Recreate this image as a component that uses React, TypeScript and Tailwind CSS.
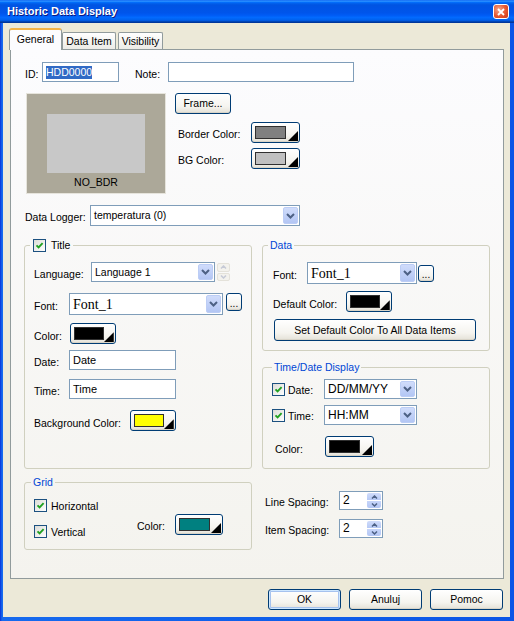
import React from "react";

function Chevron({ up = false, color = "#4d6185" }: { up?: boolean; color?: string }) {
  return (
    <svg width="9" height="6" viewBox="0 0 9 6">
      <path d={up ? "M1 5L4.5 1.5L8 5" : "M1 1L4.5 4.5L8 1"} fill="none" stroke={color} strokeWidth="2" />
    </svg>
  );
}

function SmallChevron({ up = false, color = "#4d6185" }: { up?: boolean; color?: string }) {
  return (
    <svg width="7" height="4" viewBox="0 0 7 4">
      <path d={up ? "M1 3.5L3.5 1L6 3.5" : "M1 0.5L3.5 3L6 0.5"} fill="none" stroke={color} strokeWidth="1.5" />
    </svg>
  );
}

function Combo({ className, children }: { className: string; children: React.ReactNode }) {
  return (
    <div className={`flex items-stretch border border-[#7f9db9] bg-white ${className}`}>
      <div className="flex flex-1 items-center overflow-hidden whitespace-nowrap pl-[3px]">{children}</div>
      <div className="m-[1px] flex w-[15px] items-center justify-center rounded-[2px] border border-[#bccdf5] bg-[linear-gradient(to_bottom,#d0dcfb,#b3c6f4)]">
        <Chevron />
      </div>
    </div>
  );
}

function XPButton({
  className,
  children,
  isDefault = false,
}: {
  className: string;
  children?: React.ReactNode;
  isDefault?: boolean;
}) {
  return (
    <div
      className={`flex items-center rounded-[3px] border border-[#003c74] bg-[linear-gradient(to_bottom,#ffffff_0%,#f5f4ef_65%,#e4e1d7_100%)] ${
        isDefault
          ? "shadow-[inset_0_0_0_1px_#cee7ff,inset_0_0_0_2px_#a6c2ee]"
          : "shadow-[inset_0_-1px_0_#d8d4c8]"
      } ${className}`}
    >
      {children}
    </div>
  );
}

function ColorButton({ className, swatch }: { className: string; swatch: string }) {
  return (
    <XPButton className={`justify-between pl-[3px] pr-[1px] ${className}`}>
      <div className={`h-[13px] w-[31px] border border-[#303030] ${swatch}`} />
      <svg className="mt-[7px]" width="10" height="10" viewBox="0 0 10 10">
        <path d="M10 0L10 10L0 10Z" fill="#000" />
      </svg>
    </XPButton>
  );
}

function Checkbox() {
  return (
    <div className="flex h-[13px] w-[13px] shrink-0 items-center justify-center border border-[#1c5180] bg-[linear-gradient(135deg,#dcdcd7,#ffffff)]">
      <svg width="11" height="11" viewBox="0 0 11 11">
        <path d="M2.5 5.3L4.6 7.4L8.6 3.2" fill="none" stroke="#21a121" strokeWidth="1.9" />
      </svg>
    </div>
  );
}

function TextBox({ className, children }: { className: string; children?: React.ReactNode }) {
  return (
    <div className={`flex items-center border border-[#7f9db9] bg-white pl-[3px] whitespace-nowrap ${className}`}>
      {children}
    </div>
  );
}

function Spin() {
  return (
    <div className="flex h-[19px] w-[44px] items-stretch border border-[#7f9db9] bg-white">
      <div className="flex flex-1 items-center pl-[3px] text-[12px]">2</div>
      <div className="my-[1px] mr-[1px] flex w-[14px] flex-col gap-[1px]">
        <div className="flex flex-1 items-center justify-center rounded-t-[2px] bg-[linear-gradient(to_bottom,#d0dcfb,#b6c9f5)]">
          <SmallChevron up />
        </div>
        <div className="flex flex-1 items-center justify-center rounded-b-[2px] bg-[linear-gradient(to_bottom,#c6d5fa,#b3c6f4)]">
          <SmallChevron />
        </div>
      </div>
    </div>
  );
}

function DisabledSpin() {
  return (
    <div className="ml-[2px] flex h-[18px] w-[13px] flex-col gap-[1px]">
      <div className="flex flex-1 items-center justify-center rounded-[2px] border border-[#e4e2da] bg-[#f3f2ed]">
        <SmallChevron up color="#c6cad6" />
      </div>
      <div className="flex flex-1 items-center justify-center rounded-[2px] border border-[#e4e2da] bg-[#f3f2ed]">
        <SmallChevron color="#c6cad6" />
      </div>
    </div>
  );
}

function Dots({ className }: { className: string }) {
  return (
    <XPButton className={`justify-center ${className}`}>
      <span className="mt-[3px] text-[10px] leading-[10px]">...</span>
    </XPButton>
  );
}

export default function App() {
  return (
    <div className="flex h-[621px] w-[514px] flex-col overflow-hidden bg-[linear-gradient(to_right,#0831d9,#166aee_2px,#0a55e6)] font-['Liberation_Sans',Arial,sans-serif] text-[10.5px] leading-[13px] text-black">
      {/* Title bar */}
      <div className="flex h-[23px] shrink-0 items-center justify-between bg-[linear-gradient(to_bottom,#0058ee_0%,#3593ff_4%,#288eff_6%,#127dff_8%,#036ffc_10%,#0262ee_14%,#0057e5_20%,#0054e3_24%,#0055eb_56%,#005bf5_66%,#026afe_76%,#0062ef_86%,#0052d6_92%,#0040ab_94%,#003092_100%)] pl-[7px] pr-[5px]">
        <span className="text-[11px] font-bold text-white [text-shadow:1px_1px_0_#0a1883]">Historic Data Display</span>
        <div className="flex h-[15px] w-[16px] items-center justify-center rounded-[3px] border border-white bg-[radial-gradient(circle_at_35%_35%,#f6a88c,#e5562f_55%,#c8391a)]">
          <svg width="8" height="8" viewBox="0 0 8 8">
            <path d="M1 1L7 7M7 1L1 7" stroke="#ffffff" strokeWidth="1.8" />
          </svg>
        </div>
      </div>

      {/* Client */}
      <div className="ml-[3px] mr-[4px] flex h-[594px] flex-col bg-[#ece9d8]">
        {/* Tabs */}
        <div className="mt-[5px] flex h-[21px] items-end pl-[6px]">
          <div className="relative z-10 -mb-[1px] flex h-[22px] w-[53px] items-center justify-center rounded-t-[3px] border-x border-t-2 border-[#919b9c] border-t-[#f5b446] bg-[#fcfcfe] pb-[2px]">
            General
          </div>
          <div className="flex h-[17px] w-[54px] items-center justify-center rounded-t-[2px] border border-b-0 border-[#919b9c] bg-[linear-gradient(to_bottom,#ffffff,#ecebe6)]">
            Data Item
          </div>
          <div className="ml-[2px] flex h-[17px] w-[45px] items-center justify-center rounded-t-[2px] border border-b-0 border-[#919b9c] bg-[linear-gradient(to_bottom,#ffffff,#ecebe6)]">
            Visibility
          </div>
        </div>

        {/* Panel */}
        <div className="ml-[7px] flex h-[530px] w-[494px] flex-col border border-[#919b9c] bg-[linear-gradient(to_bottom,#fcfcfe,#f4f3ee)] pl-[13px] pt-[12px]">
          {/* ID / Note */}
          <div className="flex h-[20px] items-center">
            <span className="w-[18px] pl-[1px] pt-[4px]">ID:</span>
            <TextBox className="h-[20px] w-[77px]">
              <span className="bg-[#316ac5] text-white">HDD0000</span>
            </TextBox>
            <span className="ml-[16px] w-[33px] pt-[4px]">Note:</span>
            <TextBox className="h-[20px] w-[186px]" />
          </div>

          {/* Preview + frame */}
          <div className="mt-[10px] flex">
            <div className="ml-[2px] mt-[1px] flex h-[101px] w-[140px] flex-col items-center border border-[#e6e4dc] bg-[#aca899]">
              <div className="mt-[20px] h-[59px] w-[98px] bg-[#c8c8c8]" />
              <span className="mt-[3px]">NO_BDR</span>
            </div>
            <div className="ml-[9px] flex flex-col">
              <XPButton className="mt-[1px] h-[21px] w-[56px] justify-center">Frame...</XPButton>
              <div className="mt-[8px] flex items-center">
                <span className="w-[76px] pl-[3px] pt-[4px]">Border Color:</span>
                <ColorButton className="h-[21px] w-[49px]" swatch="bg-[#808080]" />
              </div>
              <div className="mt-[5px] flex items-center">
                <span className="w-[76px] pl-[3px] pt-[4px]">BG Color:</span>
                <ColorButton className="h-[21px] w-[49px]" swatch="bg-[#c0c0c0]" />
              </div>
            </div>
          </div>

          {/* Data Logger */}
          <div className="mt-[11px] flex items-center">
            <span className="w-[66px] pl-[1px] pt-[4px]">Data Logger:</span>
            <Combo className="h-[21px] w-[210px]">temperatura (0)</Combo>
          </div>

          {/* Two columns */}
          <div className="mt-[13px] flex gap-[10px]">
            <fieldset className="h-[230px] w-[228px] rounded-[3px] border border-[#d0d0bf] pl-[9px] pt-[10px]">
              <legend className="ml-[-4px] h-[13px] px-[3px]">
                <span className="inline-flex items-center gap-[5px]">
                  <Checkbox />
                  <span>Title</span>
                </span>
              </legend>
              <div className="flex h-[20px] items-center">
                <span className="w-[57px] pt-[5px]">Language:</span>
                <Combo className="h-[20px] w-[124px]">Language 1</Combo>
                <DisabledSpin />
              </div>
              <div className="mt-[11px] flex h-[22px] items-center">
                <span className="w-[35px] pt-[5px]">Font:</span>
                <Combo className="h-[22px] w-[154px]">
                  <span className="font-['Liberation_Serif','Times_New_Roman',serif] text-[14px]">Font_1</span>
                </Combo>
                <Dots className="ml-[3px] h-[18px] w-[16px] self-start" />
              </div>
              <div className="mt-[8px] flex items-center">
                <span className="w-[36px] pt-[5px]">Color:</span>
                <ColorButton className="h-[21px] w-[46px]" swatch="bg-black" />
              </div>
              <div className="mt-[6px] flex items-center">
                <span className="w-[35px] pt-[5px]">Date:</span>
                <TextBox className="h-[20px] w-[107px] text-[11px]">Date</TextBox>
              </div>
              <div className="mt-[9px] flex items-center">
                <span className="w-[35px] pt-[5px]">Time:</span>
                <TextBox className="h-[20px] w-[107px] text-[11px]">Time</TextBox>
              </div>
              <div className="mt-[11px] flex items-center">
                <span className="w-[96px] pt-[5px]">Background Color:</span>
                <ColorButton className="h-[21px] w-[46px]" swatch="bg-[#ffff00]" />
              </div>
            </fieldset>

            <div className="flex w-[228px] flex-col gap-[10px]">
              <fieldset className="h-[112px] rounded-[3px] border border-[#d0d0bf] pl-[10px] pt-[10px]">
                <legend className="ml-[-5px] h-[13px] px-[2px] text-[#0046d5]">Data</legend>
                <div className="flex h-[22px] items-center">
                  <span className="w-[34px] pt-[5px]">Font:</span>
                  <Combo className="h-[22px] w-[110px]">
                    <span className="font-['Liberation_Serif','Times_New_Roman',serif] text-[14px]">Font_1</span>
                  </Combo>
                  <Dots className="ml-[1px] h-[17px] w-[16px]" />
                </div>
                <div className="mt-[7px] flex items-center">
                  <span className="w-[73px] pt-[5px]">Default Color:</span>
                  <ColorButton className="h-[21px] w-[46px]" swatch="bg-black" />
                </div>
                <XPButton className="ml-[1px] mt-[7px] h-[22px] w-[202px] justify-center">
                  Set Default Color To All Data Items
                </XPButton>
              </fieldset>

              <fieldset className="h-[108px] rounded-[3px] border border-[#d0d0bf] pl-[9px] pt-[5px]">
                <legend className="h-[13px] px-[2px] text-[#0046d5]">Time/Date Display</legend>
                <div className="flex h-[20px] items-center">
                  <Checkbox />
                  <span className="ml-[3px] w-[36px] pt-[3px]">Date:</span>
                  <Combo className="h-[20px] w-[93px] text-[12px]">DD/MM/YY</Combo>
                </div>
                <div className="mt-[6px] flex h-[20px] items-center">
                  <Checkbox />
                  <span className="ml-[3px] w-[36px] pt-[3px]">Time:</span>
                  <Combo className="h-[20px] w-[93px] text-[12px]">HH:MM</Combo>
                </div>
                <div className="mt-[11px] flex items-center">
                  <span className="ml-[3px] w-[50px] pt-[5px]">Color:</span>
                  <ColorButton className="h-[21px] w-[49px]" swatch="bg-black" />
                </div>
              </fieldset>
            </div>
          </div>

          {/* Grid + spacing */}
          <div className="mt-[7px] flex">
            <fieldset className="h-[74px] w-[228px] rounded-[3px] border border-[#d0d0bf] pl-[9px]">
              <legend className="ml-[-3px] h-[13px] px-[2px] text-[#0046d5]">Grid</legend>
              <div className="flex">
                <div className="flex w-[103px] flex-col gap-[13px] pt-[10px]">
                  <div className="flex h-[13px] items-center">
                    <Checkbox />
                    <span className="ml-[4px] pt-[2px]">Horizontal</span>
                  </div>
                  <div className="flex h-[13px] items-center">
                    <Checkbox />
                    <span className="ml-[4px] pt-[2px]">Vertical</span>
                  </div>
                </div>
                <div className="flex items-center pt-[21px]">
                  <span className="w-[38px] pt-[5px]">Color:</span>
                  <ColorButton className="h-[21px] w-[48px]" swatch="bg-[#008080]" />
                </div>
              </div>
            </fieldset>
            <div className="ml-[13px] flex flex-col gap-[9px] pt-[15px]">
              <div className="flex items-center">
                <span className="w-[74px] pt-[4px]">Line Spacing:</span>
                <Spin />
              </div>
              <div className="flex items-center">
                <span className="w-[74px] pt-[4px]">Item Spacing:</span>
                <Spin />
              </div>
            </div>
          </div>
        </div>

        {/* Buttons */}
        <div className="mt-[10px] flex justify-end gap-[8px] pr-[7px]">
          <XPButton className="h-[21px] w-[73px] justify-center" isDefault>
            OK
          </XPButton>
          <XPButton className="h-[21px] w-[73px] justify-center">Anuluj</XPButton>
          <XPButton className="h-[21px] w-[73px] justify-center">Pomoc</XPButton>
        </div>
      </div>
    </div>
  );
}
